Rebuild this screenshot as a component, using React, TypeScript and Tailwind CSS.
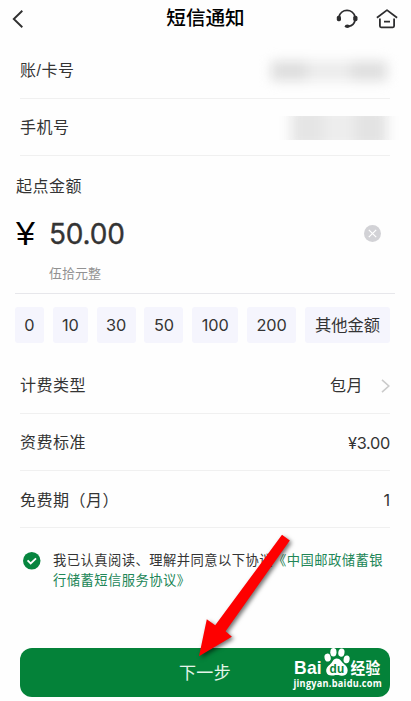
import type { ReactNode } from "react";

const amounts = ["0", "10", "30", "50", "100", "200", "其他金额"];

const chipWidths = [
  "w-[29px]",
  "w-[35px]",
  "w-[39px]",
  "w-[39px]",
  "w-[46px]",
  "w-[49px]",
  "w-[85px]",
];

function Row({ label, children }: { label: string; children: ReactNode }) {
  return (
    <div className="mr-[21px] ml-5 flex h-[57.25px] shrink-0 items-center justify-between border-b border-[#f0f0f0] pt-[3px]">
      <span className="text-base tracking-[0.5px]">{label}</span>
      {children}
    </div>
  );
}

function Header() {
  return (
    <header className="grid h-[41.5px] shrink-0 grid-cols-[1fr_auto_1fr] items-center pt-px pb-[5px]">
      <svg className="ml-3 h-[18px] w-3" viewBox="0 0 12 18" fill="none" stroke="#303030" strokeWidth="1.9" aria-hidden>
        <path d="M10.3 .8 1.8 9l8.5 8.2" />
      </svg>
      <h1 className="pt-px text-[19.6px] leading-none font-medium text-black">短信通知</h1>
      <div className="mr-[13px] flex items-center justify-end gap-[18px]">
        {/* Headset */}
        <svg className="h-[21px] w-[22px]" viewBox="0 0 22 21" fill="none" stroke="#2d2d2f" strokeWidth="1.7" aria-hidden>
          <path d="M3 8.7a8.2 8.2 0 0 1 16 0M19.1 12c-.7 3.6-3.3 5.9-6.4 6.4" />
          <rect x=".8" y="7.8" width="4.2" height="5.4" rx="1.6" fill="#2d2d2f" stroke="none" />
          <rect x="17.2" y="7.8" width="4.3" height="5.4" rx="1.8" fill="#2d2d2f" stroke="none" />
          <ellipse cx="11.3" cy="18.3" rx="2.5" ry="1.8" fill="#2d2d2f" stroke="none" />
        </svg>
        {/* Home */}
        <svg className="h-[21px] w-[22px]" viewBox="0 0 22 21" fill="none" stroke="#2d2d2f" strokeWidth="1.8" strokeLinejoin="round" aria-hidden>
          <path d="M.9 9.7 11 2.1l10.1 7.6M3.9 10.5v7.6c0 .8.4 1.2 1.2 1.2h11.8c.8 0 1.2-.4 1.2-1.2v-7.6M8 13.6h6" />
        </svg>
      </div>
    </header>
  );
}

function Watermark() {
  return (
    <svg
      className="absolute top-[-2px] right-[3px] h-[46px] w-[98px]"
      viewBox="0 0 98 46"
      fill="#fff"
      fontFamily="'Liberation Sans','Noto Sans CJK SC',sans-serif"
      fontWeight="700"
      role="img"
      aria-label="Baidu"
    >
      <text x="5" y="28" fontSize="19" textLength="28" lengthAdjust="spacingAndGlyphs">Bai</text>
      <ellipse cx="38.6" cy="11.6" rx="3.1" ry="4" transform="rotate(-12 38.6 11.6)" />
      <ellipse cx="44.4" cy="6.2" rx="3.1" ry="4.2" />
      <ellipse cx="52.4" cy="6.6" rx="3.1" ry="4.1" transform="rotate(10 52.4 6.6)" />
      <ellipse cx="57.6" cy="13.4" rx="3" ry="3.9" transform="rotate(12 57.6 13.4)" />
      <path d="M47.7 12.5c3.8 0 4.7 3.6 7.5 5.7 3 2.1 4.2 5.1 3.1 8.2-1.2 3.2-4.3 3.6-7.2 3-2.2-.4-4.2-.4-6.4 0-3.5.7-6.7-.2-7.4-3.6-.7-3 1.1-5.3 3.7-7.3 2.7-2.2 2.9-6 6.7-6Z" />
      <text x="40.4" y="27" fontSize="12.5" fill="#0a8239" textLength="15" lengthAdjust="spacingAndGlyphs">du</text>
      <text x="61.5" y="27.6" fontSize="15.5" textLength="30" lengthAdjust="spacingAndGlyphs">经验</text>
      <text x="4.5" y="41" fontSize="10.5" textLength="88.5" lengthAdjust="spacingAndGlyphs" fontFamily="'Open Sans',sans-serif">
        jingyan.baidu.com
      </text>
    </svg>
  );
}

export default function App() {
  return (
    <div className="relative flex h-[701px] w-[411px] flex-col overflow-hidden bg-[#fefefe] font-['Liberation_Sans','Noto_Sans_CJK_SC',sans-serif] text-[#343434]">
      <Header />

      <Row label="账/卡号">
        <div className="mr-[3px] flex h-5 w-[116px] justify-between blur-[6px]" aria-hidden>
          <div className="w-9 bg-[#dedede]" />
          <div className="flex-1 bg-[#ececec]" />
          <div className="w-9 bg-[#dfdfdf]" />
        </div>
      </Row>
      <Row label="手机号">
        <div className="-mr-[9px] h-6 w-[120px] overflow-hidden px-3" aria-hidden>
          <div className="-mt-2 flex h-10 blur-[6px]">
            <div className="w-8 bg-[#e5e5e5]" />
            <div className="flex-1 bg-[#ededed]" />
            <div className="w-8 bg-[#e3e3e3]" />
          </div>
        </div>
      </Row>

      <section className="mr-4 ml-[15px] flex h-[137.5px] shrink-0 flex-col border-b border-[#e7e7eb]">
        <h2 className="mt-[18.5px] ml-px text-base leading-6 tracking-[0.5px]">起点金额</h2>
        <div className="mt-[14px] flex h-[42px] items-center">
          <span className="w-[34px] pb-[2px] pl-px text-[34px] leading-none text-black">¥</span>
          <span className="font-['Inter'] text-[28px] leading-none tracking-[-0.2px] [-webkit-text-stroke:0.35px_#343434]">50.00</span>
          <svg className="mr-[14px] ml-auto size-[17px]" viewBox="0 0 17 17" aria-hidden>
            <circle cx="8.5" cy="8.5" r="8.5" fill="#d2d2d6" />
            <path d="m4.8 4.8 7.4 7.4m0-7.4-7.4 7.4" stroke="#fff" strokeWidth="1.2" />
          </svg>
        </div>
        <p className="mt-[9px] ml-[34px] text-[13px] leading-5 text-[#929292]">伍拾元整</p>
      </section>

      <div className="mr-[21px] ml-[15px] flex h-[63px] shrink-0 items-center justify-between">
        {amounts.map((amount, i) => (
          <button
            key={amount}
            className={`flex h-9 items-center justify-center rounded-[3px] bg-[#f5f5fd] font-['Inter','Noto_Sans_CJK_SC',sans-serif] text-[16.3px] ${chipWidths[i]}`}
          >
            {amount}
          </button>
        ))}
      </div>

      <Row label="计费类型">
        <span className="flex items-center text-base tracking-[0.5px]">
          包月
          <svg className="ml-[18px] h-[14px] w-[9px]" viewBox="0 0 9 14" fill="none" stroke="#cbcbcb" strokeWidth="1.6" aria-hidden>
            <path d="m1 .8 6.8 6.2L1 13.2" />
          </svg>
        </span>
      </Row>
      <Row label="资费标准">
        <span className="font-['Inter'] text-[16.3px] tracking-[-0.3px]">¥3.00</span>
      </Row>
      <Row label="免费期（月）">
        <span className="font-['Inter'] text-[16.3px]">1</span>
      </Row>

      <div className="mt-[23px] ml-[23px] flex">
        <svg className="mt-[1px] mr-[12.5px] size-[17.5px] shrink-0" viewBox="0 0 18 18" aria-hidden>
          <circle cx="9" cy="9" r="9" fill="#07853f" />
          <path d="m4.7 8.6 3.2 3.1 5.5-5.2" fill="none" stroke="#fff" strokeWidth="1.9" />
        </svg>
        <p className="text-[13.3px] leading-5 tracking-[0.45px] whitespace-nowrap">
          我已认真阅读、理解并同意以下协议
          <span className="text-[#218657]">
            《中国邮政储蓄银
            <br />
            行储蓄短信服务协议》
          </span>
        </p>
      </div>

      <button className="relative mr-[21px] ml-5 mt-auto mb-[4px] h-[49px] shrink-0 rounded-xl bg-[#048239] pt-[3px] text-[17px] tracking-[0.3px] text-[#e5f5e9]">
        下一步
        <Watermark />
      </button>

      {/* Arrow pointing at the submit button */}
      <svg className="pointer-events-none absolute top-[525px] left-[190px] h-[145px] w-[115px] drop-shadow-[2px_2px_2px_rgba(0,0,0,0.55)]" viewBox="190 525 115 145" aria-hidden>
        <path d="m282 534.7 7.8 5.7-64.2 90.8 6.3 5.5L199 656.3l7.8-37 8.4 6Z" fill="#fe0000" />
      </svg>
    </div>
  );
}
